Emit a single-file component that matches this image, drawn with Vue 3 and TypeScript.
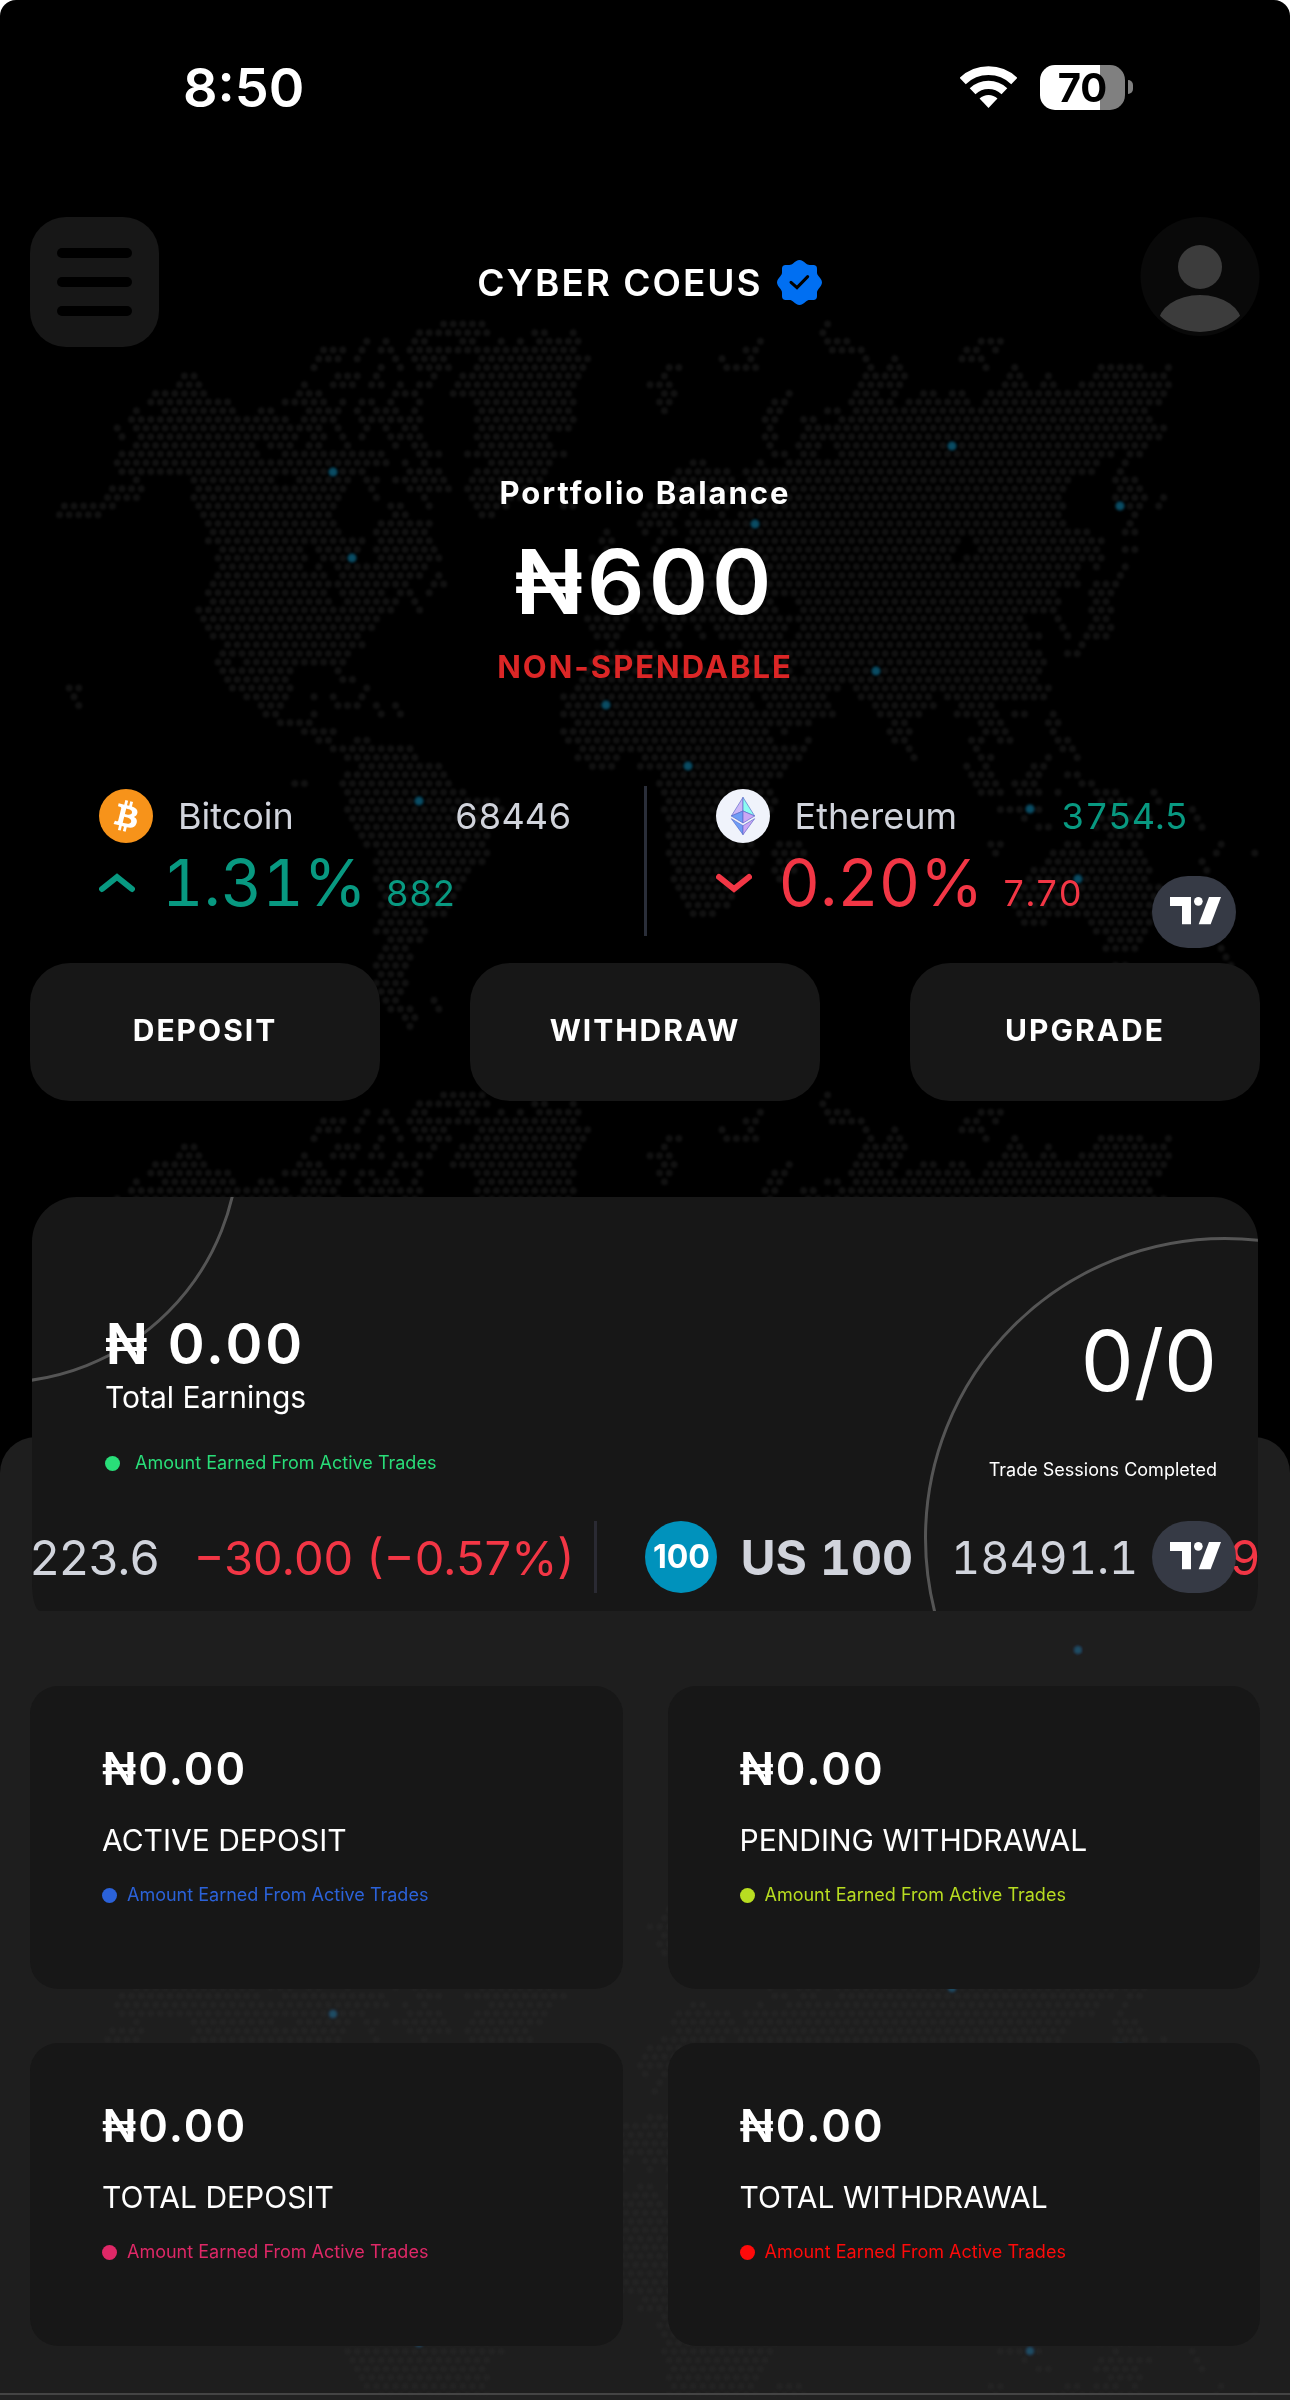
<script setup lang="ts">
interface Stat {
  label: string
  amount: string
  note: string
  color: string
}

const actions: string[] = ['DEPOSIT', 'WITHDRAW', 'UPGRADE']

const stats: Stat[] = [
  { label: 'ACTIVE DEPOSIT', amount: '₦0.00', note: 'Amount Earned From Active Trades', color: '#2b62d9' },
  { label: 'PENDING WITHDRAWAL', amount: '₦0.00', note: 'Amount Earned From Active Trades', color: '#b8dd21' },
  { label: 'TOTAL DEPOSIT', amount: '₦0.00', note: 'Amount Earned From Active Trades', color: '#df2867' },
  { label: 'TOTAL WITHDRAWAL', amount: '₦0.00', note: 'Amount Earned From Active Trades', color: '#ff0a0a' },
]

// Land spans of the dotted world map, one string per row from north to south.
const landRows: string[] = [
  '990-1085 1855',
  '938-1095 1195-1225 1285 1843',
  '820 862 925-950 1035-1065 1123 1165 1205-1300 1704 1854-1900 2200-2245',
  '722-770 810 850-880 915-1290 1672-1692 1865-1930 2167-2187 2231',
  '710-765 800 885 925-1000 1073-1290 1315 1617 1682 1942 2004 2156-2200',
  '704 852 896 938-1005 1065-1305 1495-1525 1628-1695 1952 1994-2020 2210 2274 2467-2560 2618',
  '415-438 755-802 841 970 1030-1300 1488 1937-2030 2262-2285 2348 2453-2610',
  '405-448 680 745-795 832-858 896 940-965 1020-1290 1455-1500 1930-2020 2253-2300 2337-2360 2423-2618',
  '340-460 670-718 885-935 1015-1280 1492-1512 1768 1918-1965 2004 2070-2095 2135-2160 2215-2610',
  '335-515 640-730 765 810-835 876 938 1065-1285 1478-1500 1735-1757 1905-1995 2035-2115 2135-2175 2205-2600',
  '305 365-525 582-608 685-755 800 845-890 930 1073-1265 1488 1722-1745 1855-1880 1910-2570',
  '290-640 675-750 805-940 1065-1285 1715-1735 1800-1820 1882-2580',
  '262 300-720 757 822 862 905-935 1073-1280 1724 1810-1845 1870-2610',
  '272 310-660 700-720 765 810 875-940 1065-1225 1713-1738 1795-2605',
  '300-570 605-655 690-715 778 886 925-950 1073-1235 1724 1788-1835 1880-2570',
  '268-580 635-860 940-985 1045-1265 1735-1758 1790 1818 1885-2495 2530-2555',
  '258-870 905 950 1095-1235 1552-1580 1704 1768-2465 2520',
  '268-815 912-990 1065-1210 1520-1635 1667-2450 2510',
  '305 430-610 665-785 820-835 885-995 1055-1200 1508-1640 1680-2400 2500-2545',
  '245-320 440-700 730-775 832 912-985 1005 1045-1185 1510-1640 1675-2385 2507-2545',
  '238-310 442-705 725-765 843 950 1065-1180 1480-1620 1660-2380 2500-2565 2608',
  '138-260 440-755 875-905 960 1065-1125 1265-1280 1455-1530 1560-1620 1665-2375 2505-2555 2597',
  '128-225 448-745 880-910 1073-1105 1438-1500 1555 1615 1660-2370 2542',
  '458-755 850-965 1430-1500 1545-1620 1640-2385 2532',
  '470-765 850-960 1358 1445 1490-1512 1560-2440 2520-2545',
  '465-815 850-965 1350-1370 1477 1540-2150 2190-2470',
  '490-680 710-810 848-975 1350-1370 1470 1570-2140 2195-2465 2520-2550',
  '485-680 722 750-790 850-985 1327 1600-1630 1650-2130 2165-2420 2455-2475',
  '495-680 712 760-955 1330 1600-2410 2456 2520',
  '480-735 760-930 985 1450-1600 1620-2410 2512',
  '475-725 765-880 905 975-995 1400-1720 1740-2415 2450-2505',
  '465-720 760-860 900-925 960 1390-1720 1740-2360 2445-2480',
  '475-735 768-890 925 1380-1735 1785-2375 2450-2485',
  '440-755 765-865 938 1370-1745 1790-2340 2370 2450-2490',
  '450-770 790-850 1310-1400 1440-1490 1510-1560 1575-1765 1795-2290 2365 2460-2485',
  '475-840 1325-1390 1455 1505-1530 1560 1605-1755 1800-2300 2375 2450-2480',
  '475-805 1335-1385 1510 1575 1620-1750 1800-2330 2390 2435-2475',
  '500-815 1370 1430-1460 1495-1525 1665-2300 2420',
  '490-780 1335-1475 1655-2335 2390-2415',
  '485-500 550-775 1330-1480 1665-2340',
  '495-655 755 1325-1600 1650-1760 1810-2330',
  '505-645 765-790 1300-1650 1680-1840 1870-2320',
  '155-180 515-640 820 1290-1655 1680-1850 1880 1910-2350',
  '165 548-640 700 745 810 1260-1670 1710-1850 1930-2090 2120-2340',
  '175 580-630 750-800 842 885 1265-1690 1720-1860 1960-2080 2150-2225',
  '590-625 700 853 896 1258-1700 1725-1855 1970-2065 2140-2220 2270-2300 2360',
  '620-695 1285-1710 1735-1815 2000-2030 2195-2235 2350-2372',
  '680-750 1258-1715 1757 1995-2040 2200-2245 2358',
  '710-740 795-825 1270-1725 1812 2005-2030 2175-2190 2238-2265 2370-2390',
  '740-925 1300-1805 2035 2188 2375-2405',
  '775-935 1305-1380 1440-1780 2050 2200-2225 2350 2410',
  '808-985 1325-1375 1430-1765 2165 2210 2315-2340',
  '775-1000 1480-1755 2175-2225 2315-2335 2390-2415',
  '655-685 765-1010 1475-1720 2180-2235 2275-2320 2430-2445',
  '775-1040 1490-1720 2195-2240 2280-2325 2370 2455-2505 2585',
  '785-1120 1494-1731 2470-2535 2595',
  '780-1115 1495-1722 2242-2275 2325 2493 2669',
  '785-1095 1505-1715 2293 2475-2585 2688',
  '795-1085 1510-1700 2325-2350 2450-2550 2697',
  '805-1080 1500-1690 2483-2549',
  '815-1090 1500-1690 1750-1800 2219-2247 2400-2420 2455-2502 2539 2734',
  '850-1090 1495-1685 1745-1795 2231 2358-2558 2725 2813',
  '850-1085 1505-1680 1745-1790 2340-2562 2692',
  '850-1055 1510-1670 1735-1780 2316-2567 2706',
  '850-1040 1515-1665 1745 2298-2572',
  '855-1030 1520-1650 2290-2595',
  '860-1015 1525-1640 2292-2590',
  '860-1000 1535-1625 2280-2585',
  '855-1000 1548-1605 2288-2575',
  '845-950 2288-2345 2442-2570',
  '840-955 2450-2562',
  '865-945 2480-2553',
  '860-915 2475-2550 2739',
  '855-920 2748',
  '850-910 2502-2520 2757',
  '850-905',
  '850-900',
  '855-895',
  '860-885 970',
  '865-925 985',
  '905-925',
  '915',
]

const UNIT = 1290 / 2890
const COLUMN = 9.6
const ROW = 8.67
const TILE = 771

function buildLand(rows: string[]): string {
  const parts: string[] = []
  rows.forEach((row, i) => {
    const shift = i % 2 ? 6.8 : 2
    const y = (324 + i * ROW).toFixed(1)
    for (const span of row.split(' ')) {
      const [from, to = from] = span.split('-').map(Number)
      const first = Math.round((from * UNIT - shift) / COLUMN)
      const last = Math.round((to * UNIT - shift) / COLUMN)
      for (let k = first; k <= last; k++) {
        parts.push(`M${(shift + k * COLUMN).toFixed(1)} ${y}h0`)
      }
    }
  })
  return parts.join('')
}

const land = buildLand(landRows)
const cities =
  'M333 472h0M352 558h0M952 446h0M755 524h0M1120 506h0M876 671h0M606 705h0M688 766h0M419 801h0M1030 809h0M1078 879h0'
const tiles = [
  { y: 0, color: '#111111' },
  { y: TILE, color: '#111111' },
  { y: TILE * 2, color: '#232323' },
]
</script>

<template>
  <div class="page">
    <svg class="world" viewBox="0 0 1290 2400" preserveAspectRatio="xMidYMin slice" aria-hidden="true">
      <g v-for="tile in tiles" :key="tile.y" :transform="`translate(0 ${tile.y})`" fill="none" stroke-linecap="round">
        <path :d="land" :stroke="tile.color" stroke-width="7" />
        <path :d="cities" stroke="#063040" stroke-width="10" />
        <path :d="cities" stroke="#0a4c63" stroke-width="7" />
      </g>
    </svg>

    <div class="status">
      <span class="time">8:50</span>
      <span class="indicators">
        <svg width="57" height="42" viewBox="0 0 172 126" aria-hidden="true">
          <g fill="none" stroke="#fff">
            <path d="M8 45A112.500 112.500 0 0 1 164 45" stroke-width="27" />
            <path d="M38 76A69.500 69.500 0 0 1 134 76" stroke-width="25" />
          </g>
          <path d="M86 126L59 98A39 39 0 0 1 113 98Z" fill="#fff" />
        </svg>
        <span class="battery"><span class="charge">70</span><span class="nub"></span></span>
      </span>
    </div>

    <header class="header">
      <button class="menu" type="button" aria-label="Menu"><i></i><i></i><i></i></button>
      <h1 class="brand">
        CYBER COEUS
        <svg width="45" height="45" viewBox="0 0 135 135" aria-hidden="true">
          <path fill="#006ff2" d="M67.500 0C74 0 80 5 86 10C90 13 93 15 98 15H109Q120 15 120 26V37C120 42 122 45 125 49C130 55 135 61 135 67.500C135 74 130 80 125 86C122 90 120 93 120 98V109Q120 120 109 120H98C93 120 90 122 86 125C80 130 74 135 67.500 135C61 135 55 130 49 125C45 122 42 120 37 120H26Q15 120 15 109V98C15 93 13 90 10 86C5 80 0 74 0 67.500C0 61 5 55 10 49C13 45 15 42 15 37V26Q15 15 26 15H37C42 15 45 13 49 10C55 5 61 0 67.500 0Z" />
          <path d="M42 67L60 83L92 50" fill="none" stroke="#000" stroke-width="9" stroke-linecap="round" />
        </svg>
      </h1>
      <button class="avatar" type="button" aria-label="Account">
        <svg width="120" height="119" viewBox="0 0 119 119" aria-hidden="true">
          <clipPath id="avatar-clip"><circle cx="59.500" cy="57.500" r="57.500" /></clipPath>
          <circle cx="59.500" cy="59.500" r="59.500" fill="#090909" />
          <circle cx="59.500" cy="50" r="22" fill="#3c3c3c" />
          <ellipse cx="59.500" cy="107" rx="42" ry="29" fill="#3c3c3c" clip-path="url(#avatar-clip)" />
        </svg>
      </button>
    </header>

    <section class="balance">
      <p class="caption">Portfolio Balance</p>
      <p class="total">₦600</p>
      <p class="caption warn">NON-SPENDABLE</p>
    </section>

    <section class="quotes">
      <div class="quote">
        <div class="line">
          <svg width="54" height="54" viewBox="0 0 34 34" aria-hidden="true">
            <circle cx="17" cy="17" r="17" fill="#f7931a" />
            <path transform="translate(1 1)" fill="#fff" d="M23.189 14.020c.314-2.096-1.283-3.223-3.465-3.975l.708-2.840-1.728-.430-.690 2.765c-.454-.114-.920-.220-1.385-.326l.695-2.783L15.596 6l-.708 2.839c-.376-.086-.746-.170-1.104-.260l.002-.009-2.384-.595-.460 1.846s1.283.294 1.256.312c.700.175.826.638.805 1.006l-.806 3.235c.048.012.110.030.180.057l-.183-.045-1.130 4.532c-.086.212-.303.531-.793.410.018.025-1.256-.313-1.256-.313l-.858 1.978 2.250.561c.418.105.828.215 1.231.318l-.715 2.872 1.727.430.708-2.840c.472.127.930.245 1.378.357l-.706 2.828 1.728.430.715-2.866c2.948.558 5.164.333 6.097-2.333.752-2.146-.037-3.385-1.588-4.192 1.130-.260 1.980-1.003 2.207-2.538zm-3.950 5.538c-.533 2.147-4.148.986-5.320.695l.950-3.805c1.172.293 4.929.872 4.370 3.110zm.535-5.569c-.487 1.953-3.495.960-4.470.717l.860-3.450c.975.243 4.118.696 3.610 2.733z" />
          </svg>
          <span class="name">Bitcoin</span>
          <span class="price">68446</span>
        </div>
        <div class="line change up">
          <svg width="36" height="20" viewBox="0 0 36 20" aria-hidden="true">
            <path d="M3 16L18 4L33 16" fill="none" stroke="currentColor" stroke-width="6" stroke-linecap="round" />
          </svg>
          <span class="percent">1.31%</span>
          <span class="delta">882</span>
        </div>
      </div>
      <div class="quote">
        <div class="line">
          <svg width="54" height="54" viewBox="0 0 162 162" aria-hidden="true">
            <circle cx="81" cy="81" r="81" fill="#f0f3fb" />
            <g stroke="#5a68c9" stroke-width="2" stroke-linejoin="round">
              <path d="M81 25L46 81L81 66Z" fill="#cbb7f6" />
              <path d="M81 25L116 81L81 66Z" fill="#8bfdf1" />
              <path d="M46 81L81 66V102Z" fill="#6d9df6" />
              <path d="M116 81L81 66V102Z" fill="#cba6f4" />
              <path d="M46 89L81 110V137Z" fill="#6d9df6" />
              <path d="M116 89L81 110V137Z" fill="#cba6f4" />
            </g>
          </svg>
          <span class="name">Ethereum</span>
          <span class="price up">3754.5</span>
        </div>
        <div class="line change down">
          <svg width="36" height="20" viewBox="0 0 36 20" aria-hidden="true">
            <path d="M3 4L18 16L33 4" fill="none" stroke="currentColor" stroke-width="6" stroke-linecap="round" />
          </svg>
          <span class="percent">0.20%</span>
          <span class="delta">7.70</span>
        </div>
      </div>
      <a class="tv quotes-tv" href="#" aria-label="Chart provider">
        <svg width="84" height="72" viewBox="0 0 252 216" fill="#fff" aria-hidden="true">
          <path d="M54 63H117V145H90V90H54Z" />
          <circle cx="139" cy="76" r="13" />
          <path d="M171 63H207L176 145H140Z" />
        </svg>
      </a>
    </section>

    <nav class="actions">
      <button v-for="action in actions" :key="action" type="button">{{ action }}</button>
    </nav>

    <section class="earnings">
      <div class="card">
        <span class="ring ring-small"></span>
        <span class="ring ring-large"></span>
        <div class="earned">
          <p class="sum">₦ 0.00</p>
          <p class="sum-label">Total Earnings</p>
          <p class="note earned-note"><i></i>Amount Earned From Active Trades</p>
        </div>
        <div class="sessions">
          <p class="count">0/0</p>
          <p class="count-label">Trade Sessions Completed</p>
        </div>
      </div>
      <div class="tape">
        <span>223.6</span>
        <span class="down move">−30.00 (−0.57%)</span>
        <span class="bar"></span>
        <span class="index">100</span>
        <strong>US 100</strong>
        <span class="last">18491.1</span>
        <span class="down cut">9</span>
        <a class="tv tape-tv" href="#" aria-label="Chart provider">
          <svg width="84" height="72" viewBox="0 0 252 216" fill="#fff" aria-hidden="true">
            <path d="M54 63H117V145H90V90H54Z" />
            <circle cx="139" cy="76" r="13" />
            <path d="M171 63H207L176 145H140Z" />
          </svg>
        </a>
      </div>
    </section>

    <main class="panel">
      <div class="stats">
        <article v-for="stat in stats" :key="stat.label" class="stat">
          <p class="amount">{{ stat.amount }}</p>
          <h2>{{ stat.label }}</h2>
          <p class="note" :style="{ color: stat.color }"><i></i>{{ stat.note }}</p>
        </article>
      </div>
    </main>
    <footer class="dock"></footer>
  </div>
</template>

<style>
body {
  margin: 0;
  background: #fff;
}
</style>

<style scoped>
.page {
  position: relative;
  isolation: isolate;
  overflow: hidden;
  border-radius: 16px 16px 0 0;
  background: #000;
  color: #fff;
  font-family: Inter, "Liberation Sans", sans-serif;
}
p,
h1,
h2 {
  margin: 0;
  font-weight: 400;
}
button {
  border: 0;
  padding: 0;
  color: inherit;
  font-family: inherit;
  cursor: pointer;
}
svg {
  display: block;
  flex: none;
}
.world {
  position: absolute;
  inset: 0;
  width: 100%;
  height: 100%;
  mix-blend-mode: lighten;
  filter: blur(1px);
  pointer-events: none;
}
.status,
.header,
.balance,
.quotes,
.actions,
.earnings,
.stats {
  position: relative;
  z-index: 1;
}

.status {
  display: flex;
  justify-content: space-between;
  align-items: center;
  height: 46px;
  padding: 64px 157px 0 183px;
}
.time {
  font-size: 54px;
  font-weight: 600;
}
.indicators {
  display: flex;
  align-items: center;
  gap: 23px;
}
.battery {
  position: relative;
  display: flex;
  width: 93px;
}
.charge {
  width: 85px;
  border-radius: 15px;
  background: linear-gradient(90deg, #fff 60px, #808080 60px);
  color: #000;
  font-size: 40px;
  font-weight: 700;
  line-height: 45px;
  text-align: center;
}
.nub {
  align-self: center;
  width: 5px;
  height: 14px;
  margin-left: 3px;
  border-radius: 0 5px 5px 0;
  background: #808080;
}

.header {
  display: flex;
  justify-content: space-between;
  align-items: center;
  margin-top: 107px;
  padding: 0 30px;
}
.menu {
  display: flex;
  flex-direction: column;
  justify-content: center;
  align-items: center;
  gap: 19px;
  width: 129px;
  height: 130px;
  border-radius: 36px;
  background: #171717;
}
.menu i {
  width: 75px;
  height: 10px;
  border-radius: 5px;
  background: #000;
}
.brand {
  display: flex;
  align-items: center;
  gap: 14px;
  font-size: 37px;
  font-weight: 600;
  letter-spacing: 2px;
}
.avatar {
  align-self: flex-start;
  border-radius: 50%;
  background: none;
}

.balance {
  margin-top: 126px;
  text-align: center;
}
.caption {
  font-size: 31px;
  font-weight: 700;
  line-height: 40px;
  letter-spacing: 2px;
}
.total {
  margin: 14px 0 10px;
  font-size: 90px;
  font-weight: 600;
  line-height: 110px;
  letter-spacing: 4px;
}
.warn {
  color: #dc2626;
}

.quotes {
  display: flex;
  margin: 99px 30px 0;
  color: #d1d4dc;
  font-variant-numeric: tabular-nums;
}
.quote {
  flex: 1;
  height: 150px;
  padding: 0 72px 0 69px;
}
.quote + .quote {
  border-left: 3px solid #2a2e39;
}
.line {
  display: flex;
  align-items: center;
  height: 60px;
  font-size: 36px;
}
.name {
  margin-left: 25px;
}
.price {
  margin-left: auto;
}
.change {
  height: 74px;
}
.percent {
  margin-left: 27px;
  font-size: 64px;
  line-height: 74px;
}
.delta {
  margin-left: 19px;
  padding-top: 20px;
}
.up {
  color: #089981;
}
.down {
  color: #f23645;
}
.tv {
  position: absolute;
  right: 24px;
  border-radius: 36px;
  background: #363a45;
}
.quotes-tv {
  top: 90px;
}

.actions {
  display: flex;
  gap: 90px;
  margin: 27px 30px 0;
}
.actions button {
  flex: 1;
  height: 138px;
  padding-bottom: 4px;
  border-radius: 40px;
  background: #171717;
  font-size: 30px;
  font-weight: 700;
  letter-spacing: 2px;
}

.earnings {
  margin: 96px 30px 0;
}
.card {
  position: relative;
  display: flex;
  justify-content: space-between;
  height: 414px;
  margin: 0 2px;
  padding: 0 41px 0 73px;
  box-sizing: border-box;
  overflow: hidden;
  border-radius: 45px 45px 8px 8px / 45px 45px 28px 28px;
  background: #171717;
}
.ring {
  position: absolute;
  box-sizing: border-box;
  border: 3px solid #555;
  border-radius: 50%;
}
.ring-small {
  top: -297px;
  left: -276px;
  width: 484px;
  height: 484px;
}
.ring-large {
  top: 40px;
  right: -268px;
  width: 602px;
  height: 602px;
}
.earned,
.sessions {
  position: relative;
}
.earned {
  padding-top: 112px;
}
.sum {
  font-size: 56px;
  font-weight: 600;
  line-height: 70px;
  letter-spacing: 3px;
}
.sum-label {
  font-size: 30px;
  line-height: 36px;
}
.note {
  display: flex;
  align-items: center;
  gap: 10px;
  font-size: 18px;
  line-height: 24px;
}
.note i {
  width: 15px;
  height: 15px;
  border-radius: 50%;
  background: currentColor;
}
.earned-note {
  gap: 15px;
  margin-top: 36px;
  color: #29de79;
}
.sessions {
  padding-top: 114px;
  text-align: right;
}
.count {
  font-size: 84px;
  line-height: 100px;
}
.count-label {
  margin-top: 47px;
  font-size: 18px;
  line-height: 24px;
}

.tape {
  position: relative;
  display: flex;
  align-items: center;
  height: 72px;
  margin: -90px 0 18px;
  overflow: hidden;
  color: #d1d4dc;
  font-size: 48px;
  white-space: nowrap;
}
.move {
  margin-left: 34px;
  font-size: 47px;
}
.bar {
  flex: none;
  width: 3px;
  height: 72px;
  margin-left: 20px;
  background: #2a2a33;
}
.index {
  flex: none;
  width: 72px;
  margin-left: 48px;
  border-radius: 50%;
  background: #0092bc;
  color: #fff;
  font-size: 32px;
  font-weight: 700;
  line-height: 72px;
  text-align: center;
}
.tape strong {
  margin-left: 23px;
  font-weight: 700;
  font-variant-numeric: tabular-nums;
}
.last {
  margin-left: 38px;
  font-size: 45px;
  font-variant-numeric: tabular-nums;
}
.cut {
  margin-left: auto;
}
.tape-tv {
  top: 0;
}

.panel {
  margin-top: -174px;
  padding: 249px 30px 47px;
  border-radius: 36px 36px 0 0;
  background: #1e1e1e;
}
.stats {
  display: grid;
  grid-template-columns: 1fr 1fr;
  gap: 54px 45px;
}
.stat {
  height: 303px;
  padding: 53px 72px 0;
  box-sizing: border-box;
  border-radius: 28px;
  background: #171717;
}
.amount {
  font-size: 45px;
  font-weight: 600;
  line-height: 60px;
  letter-spacing: 2px;
}
.stat h2 {
  margin: 23px 0 25px;
  font-size: 30px;
  line-height: 36px;
}
.dock {
  height: 5px;
  border-top: 2px solid #444;
  background: #222;
}
</style>
